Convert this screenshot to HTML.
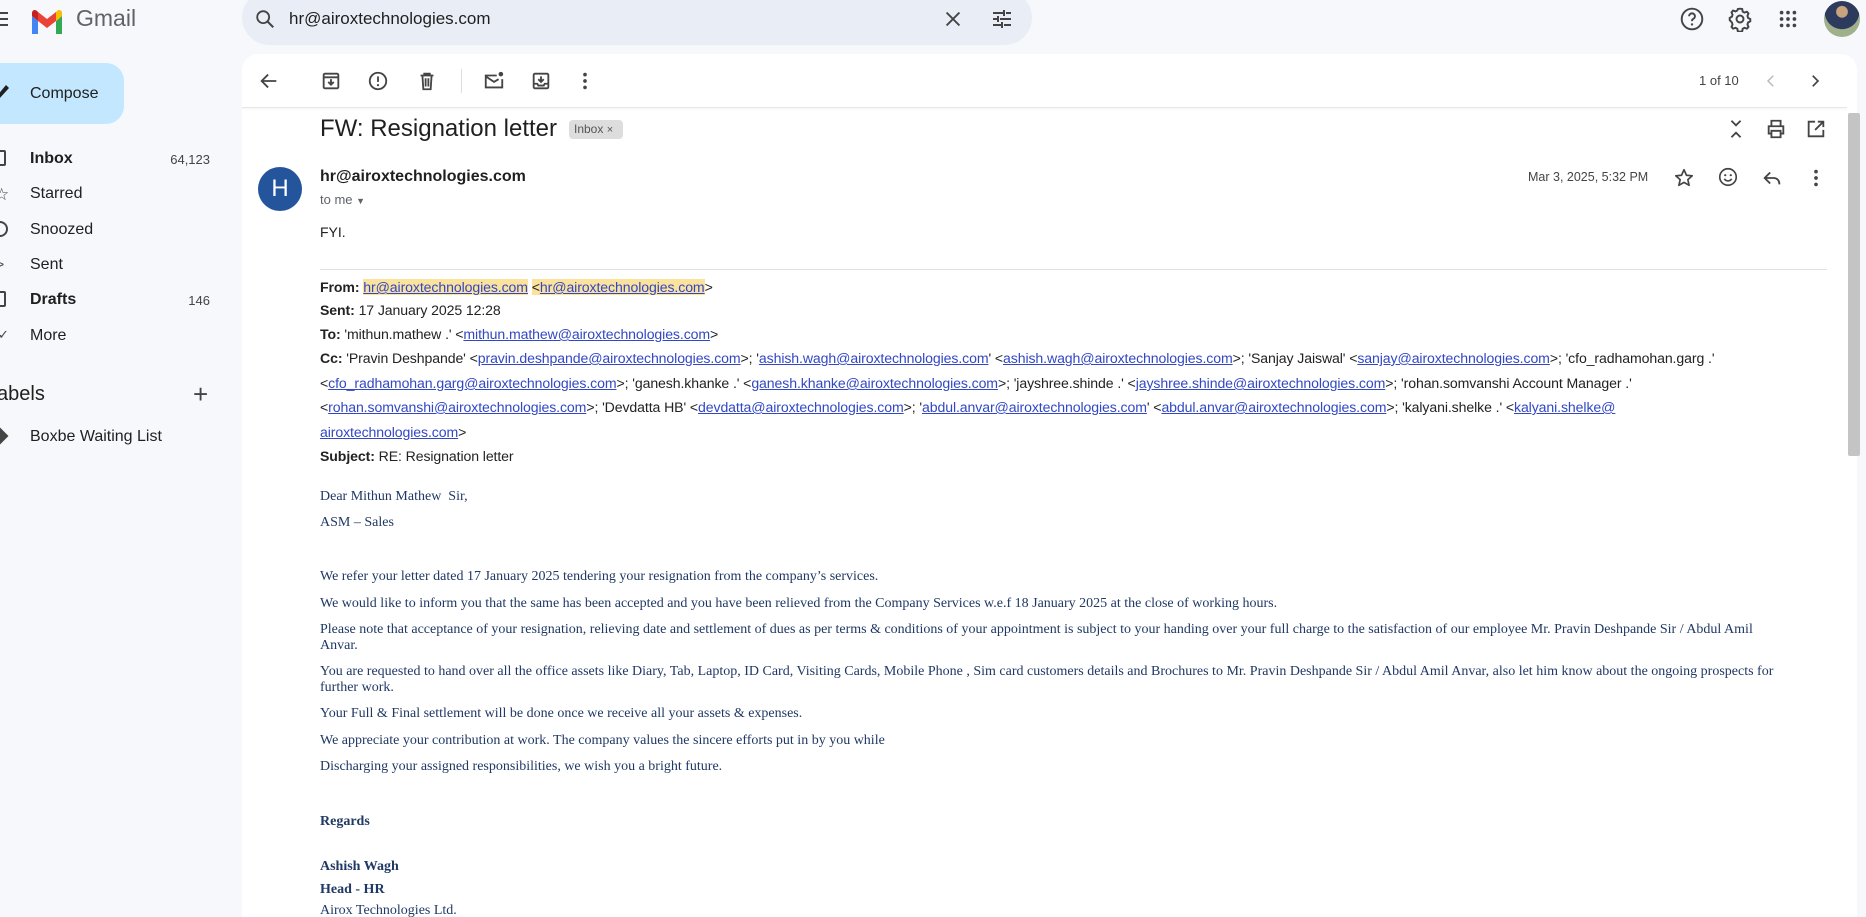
<!DOCTYPE html>
<html style="width:1866px;height:917px;overflow:hidden"><head><meta charset="utf-8">
<style>
*{margin:0;padding:0;box-sizing:border-box}
body{width:1866px;height:917px;overflow:hidden;background:#f6f8fc;font-family:"Liberation Sans",Arial,sans-serif;position:relative;color:#1f1f1f}
.abs{position:absolute}
.nav{position:absolute;left:30px;font-size:16px;color:#1f1f1f}
.cnt{position:absolute;right:1656px;font-size:13px;color:#444}
.card{position:absolute;left:242px;top:54px;width:1615px;height:863px;background:#fff;border-radius:16px 16px 0 0}
.ic{position:absolute}
.hdr{position:absolute;left:320px;font-family:"Liberation Sans",Calibri,sans-serif;font-size:14.1px;color:#222;white-space:nowrap;letter-spacing:-0.1px}
.hdr b{font-weight:bold}
a{color:#3247c4;text-decoration:underline}
.hl{background:#fbe29d}
.bd{position:absolute;left:320px;font-family:"Liberation Serif","Times New Roman",serif;font-size:14px;color:#1f3864;white-space:nowrap;line-height:16px}
</style></head><body>

<div class="abs" style="left:0;top:12px;width:8px;height:2px;background:#444;box-shadow:0 6px 0 #444,0 12px 0 #444"></div>
<svg class="abs" style="left:30px;top:8px" width="34" height="26" viewBox="0 0 34 26">
<path d="M2 26h6V13L2 8z" fill="#4285f4"/>
<path d="M26 26h6V8l-6 5z" fill="#34a853"/>
<path d="M26 4v9l6-5V5c0-3-3-4-5-2z" fill="#fbbc04"/>
<path d="M8 13V4l9 7 9-7v9l-9 7z" fill="#ea4335"/>
<path d="M2 5v3l6 5V4L7 3C5 1 2 2 2 5z" fill="#c5221f"/>
</svg>
<div class="abs" style="left:76px;top:5px;font-size:23px;color:#5f6368">Gmail</div>

<div class="abs" style="left:242px;top:-10px;width:790px;height:55px;background:#e9eef6;border-radius:28px"></div>
<svg class="abs" style="left:254px;top:8px" width="22" height="22" viewBox="0 0 24 24"><circle cx="10" cy="10" r="6.5" fill="none" stroke="#444" stroke-width="2"/><path d="M15 15l6 6" stroke="#444" stroke-width="2.2"/></svg>
<div class="abs" style="left:289px;top:9px;font-size:17px;color:#1f1f1f">hr@airoxtechnologies.com</div>
<svg class="abs" style="left:942px;top:8px" width="22" height="22" viewBox="0 0 24 24"><path d="M5 5l14 14M19 5L5 19" stroke="#444" stroke-width="2"/></svg>
<svg class="abs" style="left:990px;top:7px" width="24" height="24" viewBox="0 0 24 24"><path d="M3 6h10M16 6h5M3 12h4M10 12h11M3 18h8M14 18h7M14 3v6M8 9v6M12 15v6" stroke="#444" stroke-width="2"/></svg>

<svg class="abs" style="left:1679px;top:6px" width="26" height="26" viewBox="0 0 24 24"><circle cx="12" cy="12" r="9.5" fill="none" stroke="#444" stroke-width="1.8"/><path d="M9.3 9.5a2.7 2.7 0 1 1 3.7 2.5c-.8.4-1 1-1 2" fill="none" stroke="#444" stroke-width="1.8"/><circle cx="12" cy="17" r="1.1" fill="#444"/></svg>
<svg class="abs" style="left:1727px;top:6px" width="26" height="26" viewBox="0 0 24 24"><path d="M12 2.5l2 .3.5 2.4 1.6.9 2.3-.8 1.4 1.6-.9 2.2.5 1.8 2.1 1.2v2l-2.1 1.2-.5 1.8.9 2.2-1.4 1.6-2.3-.8-1.6.9-.5 2.4-2 .3-2-.3-.5-2.4-1.6-.9-2.3.8-1.4-1.6.9-2.2-.5-1.8L2.5 13v-2l2.1-1.2.5-1.8-.9-2.2L5.6 4.2l2.3.8 1.6-.9L10 2.8z" fill="none" stroke="#444" stroke-width="1.8"/><circle cx="12" cy="12" r="3.2" fill="none" stroke="#444" stroke-width="1.8"/></svg>
<svg class="abs" style="left:1777px;top:8px" width="22" height="22" viewBox="0 0 24 24" fill="#444"><circle cx="5" cy="5" r="2"/><circle cx="12" cy="5" r="2"/><circle cx="19" cy="5" r="2"/><circle cx="5" cy="12" r="2"/><circle cx="12" cy="12" r="2"/><circle cx="19" cy="12" r="2"/><circle cx="5" cy="19" r="2"/><circle cx="12" cy="19" r="2"/><circle cx="19" cy="19" r="2"/></svg>
<div class="abs" style="left:1824px;top:1px;width:36px;height:36px;border-radius:50%;background:radial-gradient(circle at 50% 30%,#c9a27e 0 18%,#2c3a5e 20% 55%,#9fb08a 57%)"></div>

<div class="abs" style="left:-20px;top:63px;width:144px;height:61px;background:#c2e7ff;border-radius:18px"></div>
<svg class="abs" style="left:-4px;top:83px" width="14" height="16" viewBox="0 0 14 16"><path d="M0 14L10 2l3 3L3 16z" fill="#1f1f1f"/></svg>
<div class="abs" style="left:30px;top:85px;font-size:16px;color:#1f1f1f">Compose</div>

<div class="abs" style="left:-6px;top:150px;width:12px;height:16px;border:2px solid #444;border-radius:2px"></div>
<div class="nav" style="top:150px;font-weight:bold">Inbox</div><div class="cnt" style="top:152px">64,123</div>
<div class="abs" style="left:-6px;top:185px;font-size:17px;color:#444">☆</div>
<div class="nav" style="top:185px">Starred</div>
<div class="abs" style="left:-8px;top:221px;width:16px;height:16px;border:2px solid #444;border-radius:50%"></div>
<div class="nav" style="top:221px">Snoozed</div>
<div class="abs" style="left:-4px;top:256px;font-size:14px;color:#444">&gt;</div>
<div class="nav" style="top:256px">Sent</div>
<div class="abs" style="left:-6px;top:291px;width:12px;height:16px;border:2px solid #444;border-radius:2px"></div>
<div class="nav" style="top:291px;font-weight:bold">Drafts</div><div class="cnt" style="top:293px">146</div>
<div class="abs" style="left:-2px;top:327px;font-size:13px;color:#444">✓</div>
<div class="nav" style="top:327px">More</div>
<div class="abs" style="left:-3px;top:383px;font-size:20px;color:#1f1f1f">abels</div>
<div class="abs" style="left:193px;top:379px;font-size:26px;color:#444;font-weight:300">+</div>
<div class="abs" style="left:-6px;top:430px;width:12px;height:12px;background:#444;transform:rotate(45deg)"></div>
<div class="nav" style="top:428px">Boxbe Waiting List</div>

<div class="card"></div>
<div class="abs" style="left:242px;top:107px;width:1605px;height:1px;background:#e6e6e6;box-shadow:0 1px 2px rgba(0,0,0,.08)"></div>
<svg class="ic" style="left:258px;top:70px" width="22" height="22" viewBox="0 0 24 24"><path d="M20 12H5M11 5l-7 7 7 7" fill="none" stroke="#444" stroke-width="2"/></svg>
<svg class="ic" style="left:320px;top:70px" width="22" height="22" viewBox="0 0 24 24"><rect x="4" y="4" width="16" height="16" rx="1.5" fill="none" stroke="#444" stroke-width="2"/><path d="M4 8h16M12 10v6M9 13l3 3 3-3" fill="none" stroke="#444" stroke-width="2"/></svg>
<svg class="ic" style="left:367px;top:70px" width="22" height="22" viewBox="0 0 24 24"><circle cx="12" cy="12" r="9" fill="none" stroke="#444" stroke-width="2"/><path d="M12 7v6" stroke="#444" stroke-width="2"/><circle cx="12" cy="16.5" r="1.2" fill="#444"/></svg>
<svg class="ic" style="left:416px;top:70px" width="22" height="22" viewBox="0 0 24 24"><path d="M5 6h14M9 6V4h6v2M7 6l1 15h8l1-15M10.5 9v9M13.5 9v9" fill="none" stroke="#444" stroke-width="2"/></svg>
<div class="abs" style="left:461px;top:69px;width:1px;height:24px;background:#ddd"></div>
<svg class="ic" style="left:483px;top:70px" width="22" height="22" viewBox="0 0 24 24"><path d="M15 6H3v13h18v-9" fill="none" stroke="#444" stroke-width="2"/><path d="M3 7l9 6 5-3" fill="none" stroke="#444" stroke-width="2"/><circle cx="19.5" cy="4.5" r="2.5" fill="#444"/></svg>
<svg class="ic" style="left:530px;top:70px" width="22" height="22" viewBox="0 0 24 24"><rect x="4" y="4" width="16" height="16" rx="1.5" fill="none" stroke="#444" stroke-width="2"/><path d="M12 7v6M9 10l3 3 3-3M4 15h4l1 2h6l1-2h4" fill="none" stroke="#444" stroke-width="2"/></svg>
<svg class="ic" style="left:574px;top:70px" width="22" height="22" viewBox="0 0 24 24" fill="#444"><circle cx="12" cy="5" r="2"/><circle cx="12" cy="12" r="2"/><circle cx="12" cy="19" r="2"/></svg>
<div class="abs" style="left:1699px;top:73px;font-size:13px;color:#444">1 of 10</div>
<svg class="ic" style="left:1762px;top:72px" width="18" height="18" viewBox="0 0 24 24"><path d="M15 5l-7 7 7 7" fill="none" stroke="#bbb" stroke-width="2"/></svg>
<svg class="ic" style="left:1806px;top:72px" width="18" height="18" viewBox="0 0 24 24"><path d="M9 5l7 7-7 7" fill="none" stroke="#444" stroke-width="2.2"/></svg>

<div class="abs" style="left:320px;top:115px;font-size:24px;color:#1f1f1f">FW: Resignation letter</div>
<div class="abs" style="left:569px;top:120px;width:54px;height:19px;background:#ddd;border-radius:4px;font-size:12px;color:#555;padding:2px 0 0 5px">Inbox <span style="font-size:11px">×</span></div>
<svg class="ic" style="left:1725px;top:118px" width="22" height="22" viewBox="0 0 24 24"><path d="M7 3l5 5 5-5M7 21l5-5 5 5" fill="none" stroke="#444" stroke-width="2"/></svg>
<svg class="ic" style="left:1765px;top:118px" width="22" height="22" viewBox="0 0 24 24"><path d="M7 8V3h10v5M7 17H4V9h16v8h-3M7 14h10v7H7z" fill="none" stroke="#444" stroke-width="2"/></svg>
<svg class="ic" style="left:1805px;top:118px" width="22" height="22" viewBox="0 0 24 24"><path d="M11 4H4v16h16v-7M14 4h6v6M20 4l-9 9" fill="none" stroke="#444" stroke-width="2"/></svg>

<div class="abs" style="left:258px;top:167px;width:44px;height:44px;border-radius:50%;background:#23549c;color:#fff;font-size:24px;text-align:center;line-height:44px">H</div>
<div class="abs" style="left:320px;top:168px;font-size:16px;font-weight:bold;color:#1f1f1f">hr@airoxtechnologies.com</div>
<div class="abs" style="left:320px;top:192px;font-size:13px;color:#5f6368">to me <span style="font-size:9px">▼</span></div>
<div class="abs" style="left:1528px;top:170px;font-size:12.5px;color:#444">Mar 3, 2025, 5:32 PM</div>
<svg class="ic" style="left:1673px;top:167px" width="22" height="22" viewBox="0 0 24 24"><path d="M12 3l2.7 6 6.3.6-4.8 4.2 1.4 6.2L12 16.8 6.4 20l1.4-6.2L3 9.6 9.3 9z" fill="none" stroke="#444" stroke-width="1.8" stroke-linejoin="round"/></svg>
<svg class="ic" style="left:1717px;top:166px" width="22" height="22" viewBox="0 0 24 24"><circle cx="12" cy="12" r="9" fill="none" stroke="#444" stroke-width="1.8"/><circle cx="9" cy="10" r="1.2" fill="#444"/><circle cx="15" cy="10" r="1.2" fill="#444"/><path d="M8 14c2 3 6 3 8 0" fill="none" stroke="#444" stroke-width="1.8"/></svg>
<svg class="ic" style="left:1761px;top:167px" width="22" height="22" viewBox="0 0 24 24"><path d="M10 6l-6 6 6 6M4 12h10a6 6 0 0 1 6 6v1" fill="none" stroke="#444" stroke-width="2"/></svg>
<svg class="ic" style="left:1805px;top:167px" width="22" height="22" viewBox="0 0 24 24" fill="#444"><circle cx="12" cy="5" r="2"/><circle cx="12" cy="12" r="2"/><circle cx="12" cy="19" r="2"/></svg>

<div class="abs" style="left:320px;top:224px;font-size:14px;color:#222">FYI.</div>
<div class="abs" style="left:320px;top:269px;width:1507px;height:1px;background:#e1e1e1"></div>

<div class="hdr" style="top:279px"><b>From:</b> <a class="hl">hr@airoxtechnologies.com</a> <span class="hl">&lt;<a>hr@airoxtechnologies.com</a></span>&gt;</div>
<div class="hdr" style="top:302px"><b>Sent:</b> 17 January 2025 12:28</div>
<div class="hdr" style="top:326px"><b>To:</b> 'mithun.mathew .' &lt;<a>mithun.mathew@airoxtechnologies.com</a>&gt;</div>
<div class="hdr" style="top:350px"><b>Cc:</b> 'Pravin Deshpande' &lt;<a>pravin.deshpande@airoxtechnologies.com</a>&gt;; '<a>ashish.wagh@airoxtechnologies.com</a>' &lt;<a>ashish.wagh@airoxtechnologies.com</a>&gt;; 'Sanjay Jaiswal' &lt;<a>sanjay@airoxtechnologies.com</a>&gt;; 'cfo_radhamohan.garg .'</div>
<div class="hdr" style="top:375px">&lt;<a>cfo_radhamohan.garg@airoxtechnologies.com</a>&gt;; 'ganesh.khanke .' &lt;<a>ganesh.khanke@airoxtechnologies.com</a>&gt;; 'jayshree.shinde .' &lt;<a>jayshree.shinde@airoxtechnologies.com</a>&gt;; 'rohan.somvanshi Account Manager .'</div>
<div class="hdr" style="top:399px">&lt;<a>rohan.somvanshi@airoxtechnologies.com</a>&gt;; 'Devdatta HB' &lt;<a>devdatta@airoxtechnologies.com</a>&gt;; '<a>abdul.anvar@airoxtechnologies.com</a>' &lt;<a>abdul.anvar@airoxtechnologies.com</a>&gt;; 'kalyani.shelke .' &lt;<a>kalyani.shelke@</a></div>
<div class="hdr" style="top:424px"><a>airoxtechnologies.com</a>&gt;</div>
<div class="hdr" style="top:448px"><b>Subject:</b> RE: Resignation letter</div>

<div class="bd" style="top:489px">Dear Mithun Mathew&nbsp; Sir,</div>
<div class="bd" style="top:515px">ASM – Sales</div>
<div class="bd" style="top:569px">We refer your letter dated 17 January 2025 tendering your resignation from the company’s services.</div>
<div class="bd" style="top:596px">We would like to inform you that the same has been accepted and you have been relieved from the Company Services w.e.f 18 January 2025 at the close of working hours.</div>
<div class="bd" style="top:622px">Please note that acceptance of your resignation, relieving date and settlement of dues as per terms &amp; conditions of your appointment is subject to your handing over your full charge to the satisfaction of our employee Mr. Pravin Deshpande Sir / Abdul Amil<br>Anvar.</div>
<div class="bd" style="top:664px">You are requested to hand over all the office assets like Diary, Tab, Laptop, ID Card, Visiting Cards, Mobile Phone , Sim card customers details and Brochures to Mr. Pravin Deshpande Sir / Abdul Amil Anvar, also let him know about the ongoing prospects for<br>further work.</div>
<div class="bd" style="top:706px">Your Full &amp; Final settlement will be done once we receive all your assets &amp; expenses.</div>
<div class="bd" style="top:733px">We appreciate your contribution at work. The company values the sincere efforts put in by you while</div>
<div class="bd" style="top:759px">Discharging your assigned responsibilities, we wish you a bright future.</div>
<div class="bd" style="top:814px;font-weight:bold">Regards</div>
<div class="bd" style="top:859px;font-weight:bold">Ashish Wagh</div>
<div class="bd" style="top:882px;font-weight:bold">Head - HR</div>
<div class="bd" style="top:903px">Airox Technologies Ltd.</div>

<div class="abs" style="left:1848px;top:113px;width:12px;height:343px;background:#c4c4c4;border-radius:2px"></div>
</body></html>
